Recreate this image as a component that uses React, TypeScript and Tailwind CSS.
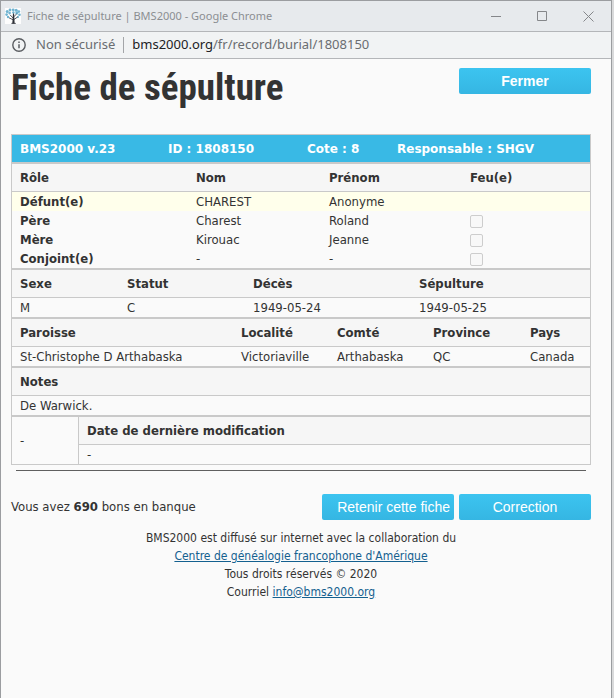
import type { ReactNode } from "react";
import { clsx } from "clsx";

const people = [
  { role: "Défunt(e)", lastName: "CHAREST", firstName: "Anonyme", highlight: true },
  { role: "Père", lastName: "Charest", firstName: "Roland" },
  { role: "Mère", lastName: "Kirouac", firstName: "Jeanne" },
  { role: "Conjoint(e)", lastName: "-", firstName: "-" },
];

function FavIcon() {
  return (
    <svg width="16" height="16" viewBox="0 0 16 16" aria-hidden="true">
      <rect width="16" height="16" fill="#fdfdfd" />
      <g fill="#6fb3d0">
        <circle cx="2.2" cy="3.4" r="1.5" />
        <circle cx="5" cy="2" r="1.4" />
        <circle cx="8.2" cy="1.8" r="1.4" />
        <circle cx="11.2" cy="2.2" r="1.5" />
        <circle cx="13.8" cy="3.6" r="1.4" />
        <circle cx="4.6" cy="5" r="1.3" />
        <circle cx="8.4" cy="4.4" r="1.2" />
        <circle cx="11.8" cy="5" r="1.5" />
        <circle cx="1.6" cy="6.6" r="1.3" />
        <circle cx="14.5" cy="6.8" r="1.3" />
        <circle cx="3" cy="9" r="1.2" />
        <circle cx="13" cy="9" r="1.1" />
      </g>
      <path
        d="M8.5 10.5L5 6.8M8.5 9L11.6 6M8.5 12L4 9.8M8.5 11.8L12.6 9M6.4 15.4h4.4"
        stroke="#2c2f36"
        strokeWidth=".8"
        fill="none"
      />
      <path d="M8 5.4h1l.7 10H7.3z" fill="#2c2f36" />
    </svg>
  );
}

function InfoIcon() {
  return (
    <svg width="14" height="14" viewBox="0 0 14 14" fill="none" aria-hidden="true">
      <circle cx="7" cy="7" r="6.2" stroke="#5a5d61" strokeWidth="1.4" />
      <path d="M7 6.2v4.1M7 3.6v1.5" stroke="#5a5d61" strokeWidth="1.5" />
    </svg>
  );
}

function WindowButton({ label, children }: { label: string; children: ReactNode }) {
  return (
    <button type="button" aria-label={label} className="flex h-full w-[46px] items-center justify-center">
      <svg width="11" height="11" viewBox="0 0 11 11" fill="none" stroke="#85878a" aria-hidden="true">
        {children}
      </svg>
    </button>
  );
}

function ActionButton({ className, children }: { className?: string; children: ReactNode }) {
  return (
    <button
      type="button"
      className={clsx(
        "h-[26px] w-[132px] whitespace-nowrap rounded-xs bg-linear-to-b from-[#3cc4f0] to-[#35b6e3] font-['Liberation_Sans',Arial,sans-serif] text-white",
        className
      )}
    >
      {children}
    </button>
  );
}

function Section({ children }: { children: ReactNode }) {
  return (
    <table className="w-full table-fixed border-separate border-spacing-0 border border-[#c9c9c9] text-left">
      {children}
    </table>
  );
}

function Th({ className, children }: { className?: string; children: ReactNode }) {
  return (
    <th
      scope="col"
      className={clsx("h-7 border-b border-[#c9c9c9] bg-[#f6f6f6] px-2 py-0 font-bold leading-4", className)}
    >
      {children}
    </th>
  );
}

function Td({ className, children }: { className?: string; children?: ReactNode }) {
  return <td className={clsx("h-[19px] whitespace-nowrap px-2 py-0 leading-4", className)}>{children}</td>;
}

function RecordTables() {
  return (
    <div className="text-[13px]">
      <table className="w-full table-fixed border-separate border-spacing-0 border border-[#c9c9c9] text-left font-['DejaVu_Sans',Verdana,sans-serif] text-xs text-white">
        <thead>
          <tr className="h-[27px] bg-[#39b9e5]">
            <th scope="col" className="w-[148px] px-2 py-0">BMS2000 v.23</th>
            <th scope="col" className="w-[139px] px-2 py-0">ID : 1808150</th>
            <th scope="col" className="w-[90px] px-2 py-0">Cote : 8</th>
            <th scope="col" className="w-[201px] px-2 py-0">Responsable : SHGV</th>
          </tr>
        </thead>
      </table>

      <Section>
        <thead>
          <tr>
            <Th className="w-[176px]">Rôle</Th>
            <Th className="w-[133px]">Nom</Th>
            <Th className="w-[141px]">Prénom</Th>
            <Th className="w-[128px]">Feu(e)</Th>
          </tr>
        </thead>
        <tbody>
          {people.map((person) => (
            <tr key={person.role} className={clsx(person.highlight && "bg-[#ffffeb]")}>
              <th scope="row" className="h-[19px] px-2 py-0 font-bold leading-4">
                {person.role}
              </th>
              <Td>{person.lastName}</Td>
              <Td>{person.firstName}</Td>
              <Td>
                {!person.highlight && (
                  <input
                    type="checkbox"
                    disabled
                    aria-label={`Feu(e) : ${person.role}`}
                    className="mt-px block size-[13px] appearance-none rounded-xs border border-[#cdcdcd] bg-[#f8f8f8]"
                  />
                )}
              </Td>
            </tr>
          ))}
        </tbody>
      </Section>

      <Section>
        <thead>
          <tr>
            <Th className="w-[107px]">Sexe</Th>
            <Th className="w-[126px]">Statut</Th>
            <Th className="w-[166px]">Décès</Th>
            <Th className="w-[179px]">Sépulture</Th>
          </tr>
        </thead>
        <tbody>
          <tr>
            <Td>M</Td>
            <Td>C</Td>
            <Td>1949-05-24</Td>
            <Td>1949-05-25</Td>
          </tr>
        </tbody>
      </Section>

      <Section>
        <thead>
          <tr>
            <Th className="w-[221px]">Paroisse</Th>
            <Th className="w-[96px]">Localité</Th>
            <Th className="w-[96px]">Comté</Th>
            <Th className="w-[97px]">Province</Th>
            <Th className="w-[68px]">Pays</Th>
          </tr>
        </thead>
        <tbody>
          <tr>
            <Td>St-Christophe D Arthabaska</Td>
            <Td>Victoriaville</Td>
            <Td>Arthabaska</Td>
            <Td>QC</Td>
            <Td>Canada</Td>
          </tr>
        </tbody>
      </Section>

      <Section>
        <thead>
          <tr>
            <Th>Notes</Th>
          </tr>
        </thead>
        <tbody>
          <tr>
            <Td>De Warwick.</Td>
          </tr>
        </tbody>
      </Section>

      <Section>
        <tbody>
          <tr>
            <td rowSpan={2} className="w-[66px] px-2 py-0 align-middle">-</td>
            <Th className="w-[512px] border-l">Date de dernière modification</Th>
          </tr>
          <tr>
            <Td className="border-l border-[#c9c9c9]">-</Td>
          </tr>
        </tbody>
      </Section>
    </div>
  );
}

export default function App() {
  return (
    <div className="flex min-h-screen bg-[#d9dadb] pr-0.5">
      <div className="flex grow flex-col border-x border-t border-[#9b9da0] bg-[#fafafa] font-['DejaVu_Sans_Condensed',Tahoma,sans-serif] text-xs text-[#333333]">
        <div className="flex h-[31px] items-center border-b border-[#b4b6b9] bg-[#e7eaed] pl-1 font-['Noto_Sans','Segoe_UI',sans-serif] text-[#8b8e92]">
          <FavIcon />
          <span className="ml-1.5 grow whitespace-nowrap text-[11px]">Fiche de sépulture | BMS2000 - Google Chrome</span>
          <WindowButton label="Réduire">
            <path d="M0 5.5h10" />
          </WindowButton>
          <WindowButton label="Agrandir">
            <path d="M.5.5h9v9h-9z" />
          </WindowButton>
          <WindowButton label="Fermer la fenêtre">
            <path d="M.5.5l10 10M10.5.5l-10 10" />
          </WindowButton>
        </div>

        <div className="flex h-[27px] items-center whitespace-nowrap border-b border-[#b4b6b9] bg-[#f1f3f4] pl-[11px] font-['Noto_Sans','Segoe_UI',sans-serif] text-[13px] text-[#6a6d71]">
          <InfoIcon />
          <span className="ml-2.5">Non sécurisé</span>
          <span className="mx-2 h-4 w-px bg-[#a3a5a8]" />
          <span>
            <span className="text-[#202124]">bms2000.org</span>/fr/record/burial/1808150
          </span>
        </div>

        <main className="pl-2.5 pr-5">
          <div className="flex items-start justify-between pt-[9px]">
            <h1 className="h-[66px] font-['Roboto_Condensed','Arial_Narrow',sans-serif] text-[37px] font-bold leading-10">
              Fiche de sépulture
            </h1>
            <ActionButton className="text-sm font-bold">Fermer</ActionButton>
          </div>

          <RecordTables />

          <hr className="mx-[5px] mt-[5px] border-[#5f5f5f]" />

          <div className="mt-[23px] flex items-center gap-[5px]">
            <p className="grow text-[13px] leading-6">
              Vous avez <b>690</b> bons en banque
            </p>
            <ActionButton className="pr-1 text-right text-sm">Retenir cette fiche</ActionButton>
            <ActionButton className="text-sm">Correction</ActionButton>
          </div>

          <footer className="mt-[9px] text-center leading-[18px]">
            <p>BMS2000 est diffusé sur internet avec la collaboration du</p>
            <p>
              <a href="#centre" className="text-[#14608f] underline">
                Centre de généalogie francophone d'Amérique
              </a>
            </p>
            <p>Tous droits réservés © 2020</p>
            <p>
              Courriel{" "}
              <a href="mailto:info@bms2000.org" className="text-[#14608f] underline">
                info@bms2000.org
              </a>
            </p>
          </footer>
        </main>
      </div>
    </div>
  );
}
